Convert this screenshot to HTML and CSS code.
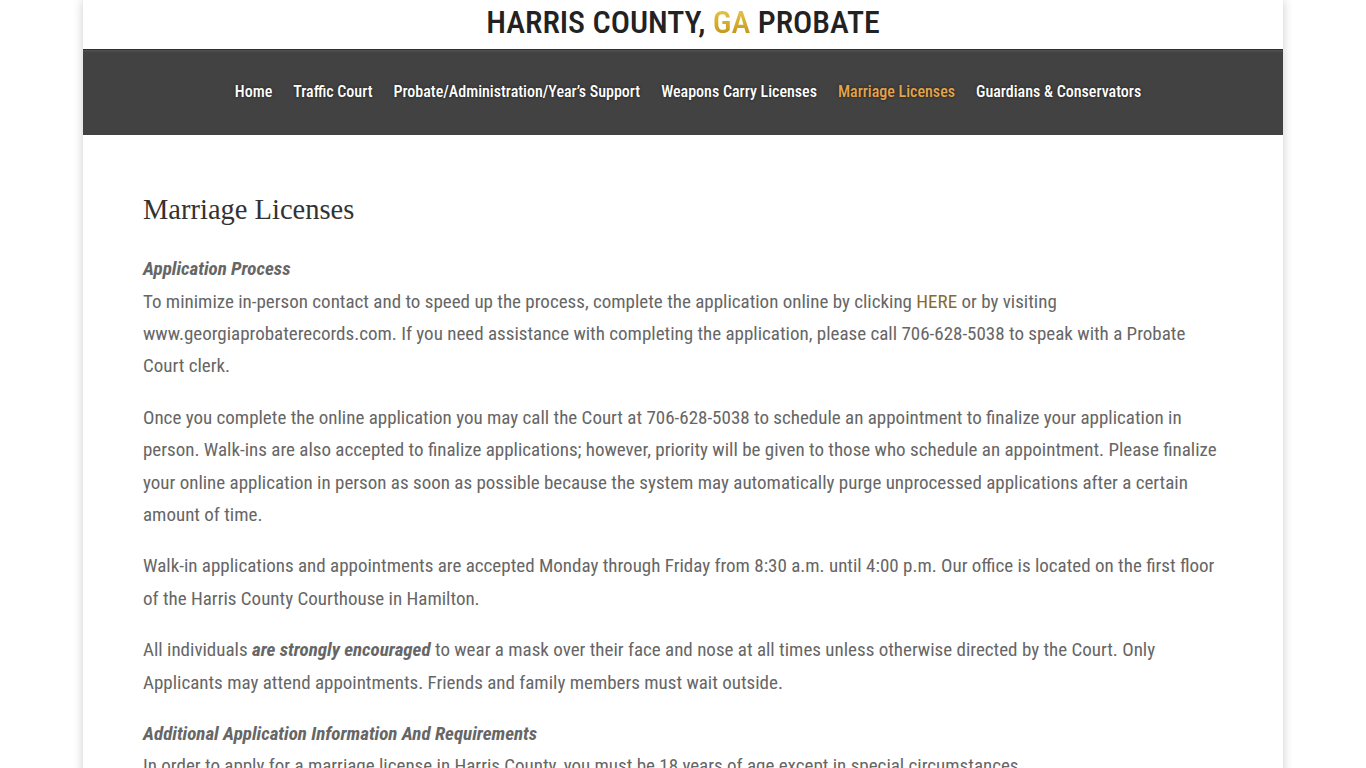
FILE: index.html
```html
<!DOCTYPE html>
<html lang="en">
<head>
<meta charset="utf-8">
<title>Marriage Licenses | Harris County, GA Probate</title>
<link rel="stylesheet" href="styles.css">
</head>
<body>
<div class="page">
  <header class="masthead">
    <div class="logo">HARRIS COUNTY, <span class="gold">GA</span> PROBATE</div>
  </header>
  <nav class="mainnav">
    <ul class="menu">
      <li><a href="#">Home</a></li>
      <li><a href="#">Traffic Court</a></li>
      <li><a href="#">Probate/Administration/Year’s Support</a></li>
      <li><a href="#">Weapons Carry Licenses</a></li>
      <li><a href="#" class="current">Marriage Licenses</a></li>
      <li><a href="#">Guardians &amp; Conservators</a></li>
    </ul>
  </nav>
  <main class="content">
    <h1 class="title">Marriage Licenses</h1>
    <p><strong><em>Application Process</em></strong><br>
    To minimize in-person contact and to speed up the process, complete the application online by clicking <a href="#" class="link">HERE</a> or by visiting www.georgiaprobaterecords.com. If you need assistance with completing the application, please call 706-628-5038 to speak with a Probate Court clerk.</p>
    <p>Once you complete the online application you may call the Court at 706-628-5038 to schedule an appointment to finalize your application in person. Walk-ins are also accepted to finalize applications; however, priority will be given to those who schedule an appointment. Please finalize your online application in person as soon as possible because the system may automatically purge unprocessed applications after a certain amount of time.</p>
    <p>Walk-in applications and appointments are accepted Monday through Friday from 8:30 a.m. until 4:00 p.m. Our office is located on the first floor of the Harris County Courthouse in Hamilton.</p>
    <p>All individuals <strong><em>are strongly encouraged</em></strong> to wear a mask over their face and nose at all times unless otherwise directed by the Court. Only Applicants may attend appointments. Friends and family members must wait outside.</p>
    <p><strong><em>Additional Application Information And Requirements</em></strong><br>
    In order to apply for a marriage license in Harris County, you must be 18 years of age except in special circumstances.</p>
  </main>
</div>
</body>
</html>
```
FILE: styles.css
```css
html, body {
  margin: 0;
  padding: 0;
  background: #fff;
}
body {
  font-family: "Roboto Condensed", Roboto, "Liberation Sans", sans-serif;
  font-stretch: condensed;
  color: #666;
}
.page {
  width: 1200px;
  margin: 0 auto;
  background: #fff;
  box-shadow: 0 0 10px rgba(0, 0, 0, 0.2);
  min-height: 768px;
}
.masthead {
  height: 49px;
  display: flex;
  justify-content: center;
  align-items: center;
}
.logo {
  font-family: Roboto, "Liberation Sans", sans-serif;
  font-stretch: condensed;
  font-weight: 500;
  font-size: 32px;
  color: #222;
  padding-bottom: 5px;
}
.gold {
  background: linear-gradient(180deg, #edd05a 0%, #d4ab2a 55%, #b58a14 100%);
  -webkit-background-clip: text;
  background-clip: text;
  color: transparent;
}
.mainnav {
  height: 86px;
  background: #424242;
  border-top: 1px solid #2e2e2e;
  box-sizing: border-box;
  box-shadow: inset 0 3px 3px -2px rgba(255, 255, 255, 0.12);
  display: flex;
  justify-content: center;
  align-items: center;
  padding-left: 10px;
  padding-bottom: 2px;
}
.menu {
  list-style: none;
  margin: 0;
  padding: 0;
  display: flex;
  gap: 21px;
}
.menu a {
  color: #fff;
  text-decoration: none;
  font-size: 16px;
  font-weight: 500;
  text-shadow: 0 0 3px rgba(0, 0, 0, 0.6);
}
.menu a.current {
  color: #e3a44a;
}
.content {
  padding: 58px 60px 0;
}
.title {
  font-family: "Liberation Serif", serif;
  font-weight: 400;
  font-size: 28.5px;
  color: #333;
  margin: 0;
  padding-bottom: 26px;
  line-height: 1.2;
}
.content p {
  margin: 0;
  padding-bottom: 19px;
  font-size: 19px;
  line-height: 32.4px;
}
.content strong {
  font-weight: 700;
}
.link {
  color: #8c6a2e;
  text-decoration: none;
}
```
